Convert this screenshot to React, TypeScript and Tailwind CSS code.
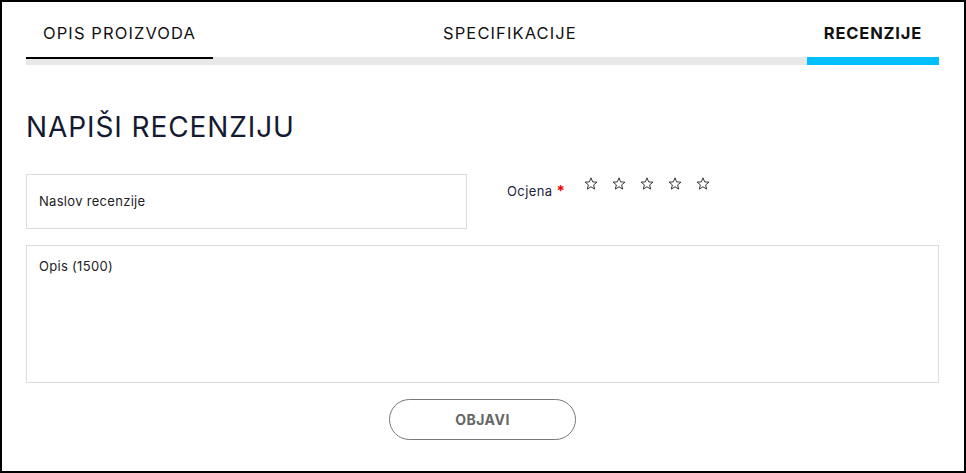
import React from "react";

const font = { fontFamily: "Inter, 'Noto Sans', sans-serif" };

function StarIcon() {
  return (
    <svg width="14" height="13" viewBox="0 0 24 23" fill="none" stroke="#222" strokeWidth="1.6" strokeLinejoin="miter">
      <polygon points="12,1.5 14.9,8.6 22.5,9.1 16.6,14 18.5,21.4 12,17.3 5.5,21.4 7.4,14 1.5,9.1 9.1,8.6" />
    </svg>
  );
}

export default function App() {
  return (
    <div className="w-[966px] h-[473px] border-2 border-black bg-white text-[#111]" style={font}>
      <div className="pl-6 pr-[25px]">
        <div className="flex justify-between shadow-[inset_0_-8px_0_#e8e8e8]">
          <div className="px-[17px] pt-[19px] pb-[12px] mb-[6px] border-b-2 border-black text-[16.5px] leading-6 tracking-[1.1px]">
            OPIS PROIZVODA
          </div>
          <div className="px-[17px] pt-[19px] pb-[12px] border-b-8 border-transparent text-[16.5px] leading-6 tracking-[1.1px]">
            SPECIFIKACIJE
          </div>
          <div className="px-[17px] pt-[19px] pb-[12px] border-b-8 border-[#00bfff] text-[16.5px] leading-6 font-bold tracking-[0.8px]">
            RECENZIJE
          </div>
        </div>

        <h2 className="mt-[45px] text-[28px] leading-[34px] text-[#141a33] tracking-[0.9px]">NAPIŠI RECENZIJU</h2>

        <div className="mt-[30px] flex items-start">
          <div className="w-[441px] h-[55px] border border-[#dcdcdc] flex items-center px-3 text-[13px] tracking-[0.3px] text-[#222]">
            Naslov recenzije
          </div>
          <div className="ml-[40px] pt-[2px] flex items-start">
            <div className="text-[13px] leading-5 mt-[5px] tracking-[0.4px] text-[#1c2540]">
              Ocjena <span className="text-[#e00] font-bold text-[15px]">*</span>
            </div>
            <div className="ml-[19px] mt-[1px] flex gap-[14px]">
              <StarIcon />
              <StarIcon />
              <StarIcon />
              <StarIcon />
              <StarIcon />
            </div>
          </div>
        </div>

        <div className="mt-[16px] h-[138px] border border-[#dcdcdc] px-3 pt-[10px] text-[13px] leading-5 tracking-[0.3px] text-[#222]">
          Opis (1500)
        </div>

        <div className="mt-[16px] flex justify-center">
          <button
            type="button"
            className="w-[187px] h-[41px] rounded-full border border-[#777] text-[14px] font-bold text-[#666] tracking-[0.5px]"
          >
            OBJAVI
          </button>
        </div>
      </div>
    </div>
  );
}
